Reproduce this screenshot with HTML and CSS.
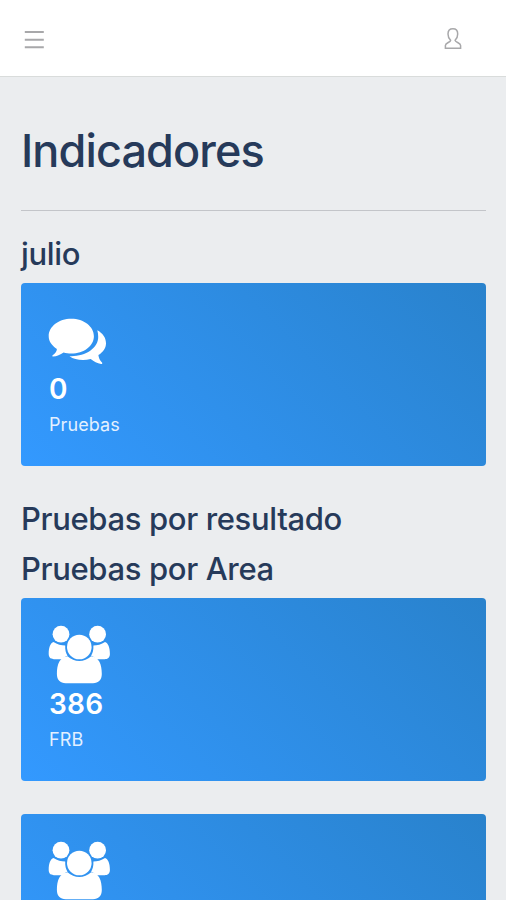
FILE: index.html
```
<!DOCTYPE html>
<html lang="es">
<head>
<meta charset="utf-8">
<meta name="viewport" content="width=device-width, initial-scale=1">
<title>Indicadores</title>
<link rel="stylesheet" href="styles.css">
</head>
<body>
<svg class="defs" aria-hidden="true">
  <symbol id="users" viewBox="0 -1 62 60">
    <circle cx="13" cy="9.200" r="8.400"/>
    <circle cx="49.600" cy="9.200" r="8.400"/>
    <path d="M5.500 17C2.500 18 .7 22 .7 29C.7 32.500 3 34.200 6 34.200H14.500C16 32.400 17.500 31.400 19.500 30.700C17.800 28 17 25 17.200 20.500C13.500 20.500 9 19.500 5.500 17Z"/>
    <path d="M57 17C60 18 61.900 22 61.900 29C61.900 32.500 59.600 34.200 56.600 34.200H48.100C46.600 32.400 45.100 31.400 43.100 30.700C44.800 28 45.600 25 45.400 20.500C49.100 20.500 53.500 19.500 57 17Z"/>
    <circle cx="31.300" cy="22" r="12.300"/>
    <path d="M19.500 31.300C23 34.500 27 36 31.300 36S39.700 34.500 43.200 31.300C51 32 53.800 39.500 53.800 49C53.800 55 50.500 58.200 45 58.200H17.700C12.200 58.200 8.900 55 8.900 49C8.900 39.500 11.700 32 19.500 31.300Z"/>
  </symbol>
</svg>
<header class="topbar">
  <button class="icon-button" aria-label="Menu">
    <svg class="menu-icon" viewBox="0 0 20 20"><path d="M.8 2H19.800M.8 9.700H19.800M.8 17.300H19.800"/></svg>
  </button>
  <button class="icon-button" aria-label="Usuario">
    <svg class="user-icon" viewBox="0 0 18 23"><path d="M6.600 13.300C4.800 11.600 4 9.300 4 6.900C4 3.700 5.900 1.800 8.900 1.800S13.700 3.700 13.700 6.900C13.700 9.300 12.900 11.600 11.100 13.300C11.500 15.500 16.600 15.600 16.600 18.500V21.300H1.400V18.500C1.400 15.600 6.300 15.500 6.600 13.300Z"/></svg>
  </button>
</header>
<main class="content">
  <h1 class="title">Indicadores</h1>
  <h2 class="subtitle month">julio</h2>
  <section class="card">
    <svg class="card-icon" viewBox="0 -7.500 62 60"><path d="M23.300 2.300C35.800 2.300 45.900 10 45.900 19.700S35.800 37 23.300 37C20.500 37 18 36.700 15.600 35.900C12.300 38.300 8.900 39.700 4.900 39.900C4 39.900 4 39.200 4.700 38.700C7.500 36.500 8.700 34.700 8.900 32.400C3.900 29.200.7 24.800.7 19.700C.7 10 10.800 2.300 23.300 2.300Z"/><path d="M49.300 13.800C54.500 16.500 58 21.200 58 26.700C58 31.500 55.300 35.500 50.400 38.500C50.700 41.500 51.700 43.700 54 46C54.700 46.900 54.100 47.700 53 47.500C49.200 46.600 46 45.300 42.700 42.600C34.500 44.500 26.500 43.300 21.500 39.700C36.500 40.500 50.500 32 50.200 20.300C50.200 18 49.900 16 49.300 13.800Z"/></svg>
    <strong class="value">0</strong>
    <span class="label">Pruebas</span>
  </section>
  <h2 class="subtitle result">Pruebas por resultado</h2>
  <h2 class="subtitle area">Pruebas por Area</h2>
  <section class="card">
    <svg class="card-icon"><use href="#users"/></svg>
    <strong class="value">386</strong>
    <span class="label">FRB</span>
  </section>
  <section class="card">
    <svg class="card-icon"><use href="#users"/></svg>
  </section>
</main>
</body>
</html>
```
FILE: styles.css
```
* { box-sizing: border-box; }
body {
  margin: 0;
  background: #ebedef;
  color: #263a5a;
  font-family: Inter, "Liberation Sans", sans-serif;
}
.defs { display: none; }
.topbar {
  display: flex;
  align-items: center;
  justify-content: space-between;
  height: 77px;
  padding: 1px 44px 0 24px;
  background: #fff;
  border-bottom: 1px solid #d9dcdb;
}
.icon-button {
  display: flex;
  padding: 0;
  border: 0;
  background: none;
}
.menu-icon, .user-icon { fill: none; stroke: #a8a8aa; }
.menu-icon { width: 20px; height: 20px; margin-top: 3px; stroke-width: 2; }
.user-icon { width: 18px; height: 23px; stroke-width: 1.5; }
.content {
  height: calc(100vh - 77px);
  padding: 44px 20px 0 21px;
  overflow: hidden;
}
h1, h2 { margin: 0; font-weight: 450; }
.title {
  height: 90px;
  border-bottom: 1px solid #c3c5c9;
  font-size: 45px;
  letter-spacing: -0.9px;
  line-height: 60px;
}
.subtitle { font-size: 31px; letter-spacing: -0.35px; line-height: 40px; }
.month { margin: 23px 0 9px; }
.area { margin: 10px 0 9px; }
.card {
  display: flex;
  flex-direction: column;
  align-items: flex-start;
  height: 183px;
  margin-bottom: 33px;
  padding: 26px 27px;
  border-radius: 4px;
  background: linear-gradient(45deg, #3399ff, #2982cc);
  color: #fff;
}
.card-icon { flex: none; width: 62px; height: 60px; fill: #fff; }
.value { margin-left: 1px; font-size: 28px; font-weight: 600; letter-spacing: 0.2px; line-height: 40px; }
.label { margin: 3px 0 0 1px; font-size: 18px; letter-spacing: 0.1px; line-height: 26px; color: #e3f0ff; }
```
